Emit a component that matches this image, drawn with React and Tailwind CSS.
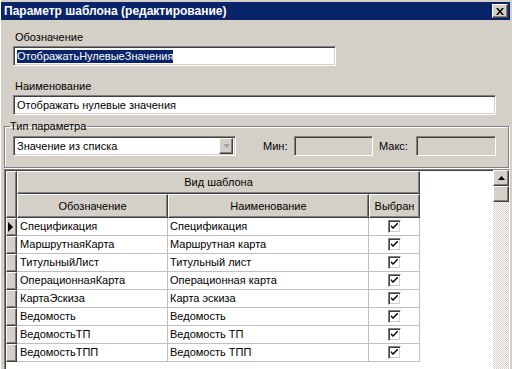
import React from 'react'

const sunken = 'border border-t-[#808080] border-l-[#808080] border-b-white border-r-white shadow-[inset_1px_1px_0_#404040,inset_-1px_-1px_0_#d4d0c8]'
const raised = 'border border-t-white border-l-white border-b-[#404040] border-r-[#404040] shadow-[inset_-1px_-1px_0_#808080]'

const rows = [
  ['Спецификация', 'Спецификация'],
  ['МаршрутнаяКарта', 'Маршрутная карта'],
  ['ТитульныйЛист', 'Титульный лист'],
  ['ОперационнаяКарта', 'Операционная карта'],
  ['КартаЭскиза', 'Карта эскиза'],
  ['Ведомость', 'Ведомость'],
  ['ВедомостьТП', 'Ведомость ТП'],
  ['ВедомостьТПП', 'Ведомость ТПП'],
]

const Check = () => (
  <div className="w-[13px] h-[13px] bg-white border border-t-[#808080] border-l-[#808080] border-b-white border-r-white shadow-[inset_1px_1px_0_#404040,inset_-1px_-1px_0_#d4d0c8] flex items-center justify-center">
    <svg width="7" height="7" viewBox="0 0 7 7">
      <path d="M0 2 L0 4 L2 6 L7 1 L7 -1 L2 4 Z" fill="#000" />
    </svg>
  </div>
)

const App = () => {
  return (
    <div className="w-[512px] h-[369px] bg-[#d4d0c8] overflow-hidden text-[11px] text-black font-['Liberation_Sans',Arial,sans-serif] border-l border-l-white">
      {/* title bar */}
      <div className="ml-[0px] mt-[2px] w-[509px] h-[18px] bg-[#0a246a] flex items-center justify-between pl-[3px] pr-[2px]">
        <span className="text-white font-bold text-[12px] leading-[18px]">Параметр шаблона (редактирование)</span>
        <div className={`w-[16px] h-[14px] bg-[#d4d0c8] flex items-center justify-center ${raised}`}>
          <svg width="8" height="7" viewBox="0 0 8 7">
            <path d="M0 0 H2 L4 2.5 L6 0 H8 L5 3.5 L8 7 H6 L4 4.5 L2 7 H0 L3 3.5 Z" fill="#000" />
          </svg>
        </div>
      </div>

      <div className="pl-[12px]">
        <p className="mt-[11px] pl-[2px] leading-[13px]">Обозначение</p>
        <div className={`mt-[2px] w-[323px] h-[20px] bg-white pl-[3px] flex items-center ${sunken}`}>
          <span className="bg-[#0a246a] text-white leading-[13px]">ОтображатьНулевыеЗначения</span>
        </div>
        <p className="mt-[14px] pl-[2px] leading-[13px]">Наименование</p>
        <div className={`mt-[2px] w-[483px] h-[20px] bg-white pl-[3px] flex items-center ${sunken}`}>
          <span className="leading-[13px]">Отображать нулевые значения</span>
        </div>
      </div>

      <fieldset className="ml-[3px] mt-[5px] w-[505px] h-[48px] border border-[#808080] shadow-[1px_1px_0_#fff,inset_1px_1px_0_#fff] px-[8px]">
        <legend className="ml-[-3px] pr-[1px] leading-[13px]">Тип параметра</legend>
        <div className="flex items-center mt-[3px]">
          <div className={`w-[223px] h-[20px] bg-white flex items-center justify-between pl-[3px] pr-[2px] ${sunken}`}>
            <span className="leading-[13px]">Значение из списка</span>
            <div className={`w-[14px] h-[16px] bg-[#d4d0c8] flex items-center justify-center ${raised}`}>
              <svg width="7" height="4" viewBox="0 0 7 4">
                <path d="M0 0 H7 L3.5 4 Z" fill="#a0a0a0" />
              </svg>
            </div>
          </div>
          <span className="ml-[27px] w-[31px]">Мин:</span>
          <div className={`w-[79px] h-[20px] ${sunken}`} />
          <span className="ml-[6px] w-[37px]">Макс:</span>
          <div className={`w-[80px] h-[20px] ${sunken}`} />
        </div>
      </fieldset>

      <div className={`ml-[3px] mt-[1px] w-[506px] h-[210px] bg-white flex ${sunken}`}>
        <div className="flex-1 p-[1px] pl-[1px]">
          {/* header */}
          <div className="flex">
            <div className={`w-[11px] h-[47px] bg-[#d4d0c8] ${raised}`} />
            <div className="flex flex-col">
              <div className={`w-[403px] h-[23px] bg-[#d4d0c8] flex items-center justify-center ${raised}`}>Вид шаблона</div>
              <div className="flex">
                <div className={`w-[151px] h-[24px] bg-[#d4d0c8] flex items-center justify-center ${raised}`}>Обозначение</div>
                <div className={`w-[201px] h-[24px] bg-[#d4d0c8] flex items-center justify-center ${raised}`}>Наименование</div>
                <div className={`w-[51px] h-[24px] bg-[#d4d0c8] flex items-center justify-center ${raised}`}>Выбран</div>
              </div>
            </div>
          </div>
          {rows.map((r, i) => (
            <div className="flex h-[18px]" key={r[0]}>
              <div className={`w-[11px] h-[18px] bg-[#d4d0c8] flex items-center ${raised}`}>
                {i === 0 && (
                  <svg width="6" height="10" viewBox="0 0 6 10" className="ml-[1px]">
                    <path d="M0 0 L5 5 L0 10 Z" fill="#000" />
                  </svg>
                )}
              </div>
              <div className="w-[151px] border-r border-b border-[#c0c0c0] pl-[3px] leading-[17px]">{r[0]}</div>
              <div className="w-[201px] border-r border-b border-[#c0c0c0] pl-[2px] leading-[17px]">{r[1]}</div>
              <div className="w-[51px] border-r border-b border-[#c0c0c0] flex items-center justify-center">
                <Check />
              </div>
            </div>
          ))}
        </div>
        {/* scrollbar */}
        <div className="w-[16px] flex flex-col bg-[repeating-conic-gradient(#d4d0c8_0_25%,#ffffff_0_50%)] bg-[length:2px_2px]">
          <div className={`h-[16px] bg-[#d4d0c8] flex items-center justify-center ${raised}`}>
            <svg width="7" height="4" viewBox="0 0 7 4">
              <path d="M0 4 H7 L3.5 0 Z" fill="#000" />
            </svg>
          </div>
          <div className={`h-[16px] bg-[#d4d0c8] ${raised}`} />
        </div>
      </div>
    </div>
  )
}

export default App
